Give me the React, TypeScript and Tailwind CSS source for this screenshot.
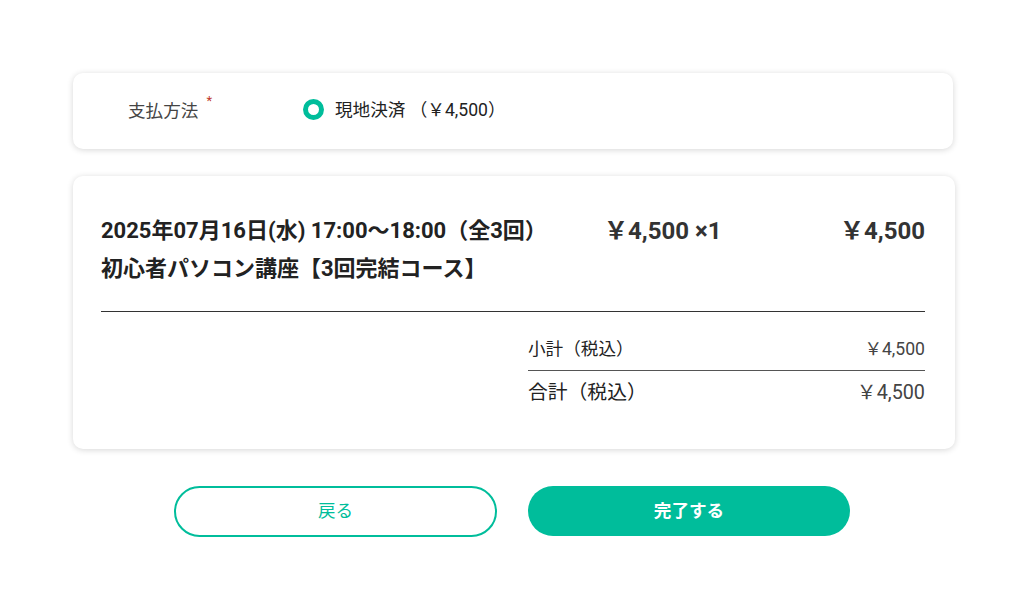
import React from 'react';

const font = { fontFamily: 'Roboto, "Noto Sans CJK JP", sans-serif' };

const App = () => {
  return (
    <div className="min-h-screen w-full bg-white pt-[73px]" style={font}>
      {/* 支払方法 */}
      <div className="ml-[73px] w-[880px] h-[76px] bg-white rounded-[10px] shadow-[0_1px_6px_rgba(0,0,0,0.16)] flex items-center pl-[55px]">
        <div className="w-[175px] flex items-start text-[17.6px] text-[#444]">
          <span>支払方法</span>
          <span className="ml-[8px] -mt-[7px] text-[13px] text-[#c0392b]">*</span>
        </div>
        <label className="flex items-center gap-[11px] text-[17.6px] text-[#222] -mt-[2px]">
          <span className="w-[21px] h-[21px] rounded-full border-[5px] border-[#00bd9b] bg-white" />
          <span>現地決済 （￥4,500）</span>
        </label>
      </div>

      {/* 注文内容 */}
      <div className="ml-[73px] mt-[27px] w-[882px] bg-white rounded-[10px] shadow-[0_1px_6px_rgba(0,0,0,0.16)] pl-[28px] pr-[30px] pt-[36px] pb-[34px]">
        <div className="flex items-start text-[#222]">
          <div className="w-[503px] font-bold text-[22px] leading-[38px]">
            <div>2025年07月16日(水) 17:00〜18:00（全3回）</div>
            <div>初心者パソコン講座【3回完結コース】</div>
          </div>
          <div className="flex-1 font-bold text-[24px] leading-[38px] text-[#333]">￥4,500 ×1</div>
          <div className="font-bold text-[24px] leading-[38px] text-[#333]">￥4,500</div>
        </div>
        <div className="mt-[23px] border-t border-[#333]" />
        <div className="ml-auto mt-[17px] w-[397px] text-[#222]">
          <div className="flex justify-between items-center h-[42px] border-b border-[#555] text-[17.6px]">
            <span>小計（税込）</span>
            <span className="text-[#444]">￥4,500</span>
          </div>
          <div className="flex justify-between items-center h-[44px] text-[19.8px]">
            <span>合計（税込）</span>
            <span className="text-[#444]">￥4,500</span>
          </div>
        </div>
      </div>

      {/* ボタン */}
      <div className="mt-[37px] flex justify-center gap-[31px]">
        <button className="w-[323px] h-[51px] rounded-full border-2 border-[#00bd9b] bg-white text-[17.6px] text-[#00bd9b]">
          戻る
        </button>
        <button className="w-[322px] h-[50px] rounded-full bg-[#00bd9b] text-[17.6px] font-bold text-white">
          完了する
        </button>
      </div>
    </div>
  );
};

export default App;
